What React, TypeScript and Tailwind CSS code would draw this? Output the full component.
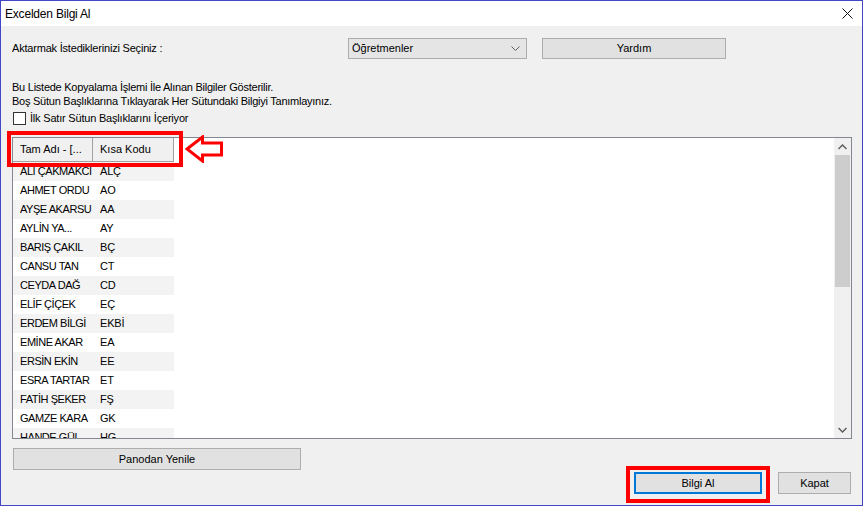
import React from "react";

const rows: [string, string][] = [
  ["ALİ ÇAKMAKCI", "ALÇ"],
  ["AHMET ORDU", "AO"],
  ["AYŞE AKARSU", "AA"],
  ["AYLİN YA...", "AY"],
  ["BARIŞ ÇAKIL", "BÇ"],
  ["CANSU TAN", "CT"],
  ["CEYDA DAĞ", "CD"],
  ["ELİF ÇİÇEK", "EÇ"],
  ["ERDEM BİLGİ", "EKBİ"],
  ["EMİNE AKAR", "EA"],
  ["ERSİN EKİN", "EE"],
  ["ESRA TARTAR", "ET"],
  ["FATİH ŞEKER", "FŞ"],
  ["GAMZE KARA", "GK"],
  ["HANDE GÜL", "HG"],
];

export default function App() {
  return (
    <div
      className="w-[863px] h-[506px] border border-[#4147c6] bg-[#f0f0f0] flex flex-col text-[11px] text-black overflow-hidden"
      style={{ fontFamily: '"Liberation Sans", Arial, sans-serif' }}
    >
      {/* title bar */}
      <div className="h-[25px] bg-white flex items-center justify-between pl-[4px] pr-[9px] shrink-0">
        <span className="text-[12px] leading-none tracking-[-0.2px]">Excelden Bilgi Al</span>
        <svg width="11" height="11" viewBox="0 0 11 11">
          <path d="M0.5 0.5 L10.5 10.5 M10.5 0.5 L0.5 10.5" stroke="#111" strokeWidth="1" />
        </svg>
      </div>

      {/* row 1 */}
      <div className="flex items-center mt-[12px] h-[21px]">
        <div className="w-[347px] pl-[11px] tracking-[-0.2px]">Aktarmak İstediklerinizi Seçiniz :</div>
        <div className="w-[179px] h-[21px] border border-[#acacac] bg-[#e5e5e5] flex items-center justify-between pl-[3px] pr-[6px]">
          <span>Öğretmenler</span>
          <svg width="9" height="6" viewBox="0 0 9 6">
            <path d="M0.5 0.5 L4.5 4.5 L8.5 0.5" stroke="#606060" fill="none" strokeWidth="1" />
          </svg>
        </div>
        <div className="ml-[15px] w-[184px] h-[21px] border border-[#adadad] bg-[#e1e1e1] flex items-center justify-center">
          Yardım
        </div>
      </div>

      {/* info text */}
      <div className="mt-[21px] pl-[11px] leading-[14px] tracking-[-0.25px]">
        <div>Bu Listede Kopyalama İşlemi İle Alınan Bilgiler Gösterilir.</div>
        <div>Boş Sütun Başlıklarına Tıklayarak Her Sütundaki Bilgiyi Tanımlayınız.</div>
      </div>

      {/* checkbox */}
      <div className="mt-[3px] h-[15px] flex items-center pl-[12px] gap-[4px]">
        <div className="w-[13px] h-[13px] border border-[#333] bg-white" />
        <span className="tracking-[-0.2px]">İlk Satır Sütun Başlıklarını İçeriyor</span>
      </div>

      {/* list */}
      <div className="relative mt-[11px] ml-[11px] w-[840px] h-[302px] border border-[#828790] bg-white flex">
        <div className="flex-1 overflow-hidden">
          <div className="flex h-[24px] w-[161px] bg-[#f0f0f0]">
            <div className="w-[80px] border-r border-b border-[#a0a0a0] flex items-center pl-[7px]">Tam Adı - [...</div>
            <div className="w-[81px] border-r border-b border-[#a0a0a0] flex items-center pl-[7px]">Kısa Kodu</div>
          </div>
          {rows.map(([a, b], i) => (
            <div key={i} className={`flex h-[19px] w-[161px] items-center ${i % 2 === 0 ? "bg-[#f3f3f3]" : "bg-white"}`}>
              <div className="w-[80px] pl-[7px] whitespace-nowrap tracking-[-0.45px]">{a}</div>
              <div className="w-[81px] pl-[7px] whitespace-nowrap tracking-[-0.2px]">{b}</div>
            </div>
          ))}
        </div>
        {/* scrollbar */}
        <div className="w-[17px] bg-[#f0f0f0] flex flex-col">
          <div className="h-[17px] flex items-center justify-center">
            <svg width="9" height="6" viewBox="0 0 9 6">
              <path d="M0.5 5 L4.5 1 L8.5 5" stroke="#606060" fill="none" strokeWidth="1.5" />
            </svg>
          </div>
          <div className="h-[132px] mx-[1px] bg-[#cdcdcd]" />
          <div className="flex-1" />
          <div className="h-[17px] flex items-center justify-center">
            <svg width="9" height="6" viewBox="0 0 9 6">
              <path d="M0.5 1 L4.5 5 L8.5 1" stroke="#606060" fill="none" strokeWidth="1.5" />
            </svg>
          </div>
        </div>
        {/* red highlight around header */}
        <div className="absolute left-[-6px] top-[-7px] w-[176px] h-[36px] border-[4px] border-[#ff0000] pointer-events-none" />
        {/* arrow */}
        <svg className="absolute left-[172px] top-[-3px]" width="40" height="28" viewBox="0 0 40 28">
          <path
            d="M2 14 L17.5 2 L17.5 8 L36.5 8 L36.5 20 L17.5 20 L17.5 26 Z"
            fill="white"
            stroke="#ff0000"
            strokeWidth="3"
            strokeLinejoin="miter"
          />
        </svg>
      </div>

      {/* bottom */}
      <div className="mt-[9px] flex items-start pl-[12px] pr-[11px]">
        <div className="w-[288px] h-[22px] border border-[#adadad] bg-[#e1e1e1] flex items-center justify-center">
          Panodan Yenile
        </div>
        <div className="flex-1" />
        <div className="mt-[24px] flex">
          <div className="relative w-[128px] h-[22px] border-2 border-[#0078d7] bg-[#e1e1e1] flex items-center justify-center">
            Bilgi Al
            <div className="absolute left-[-10px] top-[-8px] w-[144px] h-[37px] border-[4px] border-[#ff0000] pointer-events-none" />
          </div>
          <div className="ml-[16px] w-[73px] h-[22px] border border-[#adadad] bg-[#e1e1e1] flex items-center justify-center">
            Kapat
          </div>
        </div>
      </div>
    </div>
  );
}
